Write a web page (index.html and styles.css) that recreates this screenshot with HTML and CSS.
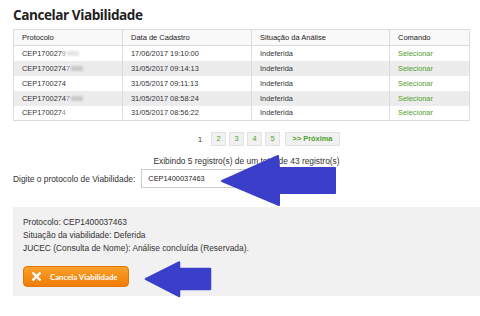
FILE: index.html
```html
<!DOCTYPE html>
<html lang="pt-BR">
<head>
<meta charset="utf-8">
<title>Cancelar Viabilidade</title>
<link rel="stylesheet" href="styles.css">
</head>
<body>
<main class="page">
  <h1 class="title">Cancelar Viabilidade</h1>
  <table class="grid">
    <thead>
      <tr><th class="c1">Protocolo</th><th class="c2">Data de Cadastro</th><th class="c3">Situação da Análise</th><th class="c4">Comando</th></tr>
    </thead>
    <tbody>
      <tr><td>CEP170027<span class="part">9</span><span class="mask light"></span></td><td>17/06/2017 19:10:00</td><td>Indeferida</td><td><a class="link" href="#">Selecionar</a></td></tr>
      <tr class="alt"><td>CEP1700274<span class="part">7</span><span class="mask"></span></td><td>31/05/2017 09:14:13</td><td>Indeferida</td><td><a class="link" href="#">Selecionar</a></td></tr>
      <tr><td>CEP1700274</td><td>31/05/2017 09:11:13</td><td>Indeferida</td><td><a class="link" href="#">Selecionar</a></td></tr>
      <tr class="alt"><td>CEP1700274<span class="part">7</span><span class="mask"></span></td><td>31/05/2017 08:58:24</td><td>Indeferida</td><td><a class="link" href="#">Selecionar</a></td></tr>
      <tr><td>CEP170027<span class="part">4</span></td><td>31/05/2017 08:56:22</td><td>Indeferida</td><td><a class="link" href="#">Selecionar</a></td></tr>
    </tbody>
  </table>
  <nav class="pager">
    <span class="current">1</span>
    <a class="pg" href="#">2</a>
    <a class="pg" href="#">3</a>
    <a class="pg" href="#">4</a>
    <a class="pg" href="#">5</a>
    <a class="pg next" href="#">&gt;&gt; Próxima</a>
  </nav>
  <p class="summary">Exibindo 5 registro(s) de um total de 43 registro(s)</p>
  <div class="search">
    <label class="label" for="proto">Digite o protocolo de Viabilidade:</label>
    <input class="field" id="proto" type="text" value="CEP1400037463">
  </div>
  <section class="result">
    <p class="line">Protocolo: CEP1400037463</p>
    <p class="line">Situação da viabilidade: Deferida</p>
    <p class="line">JUCEC (Consulta de Nome): Análise concluída (Reservada).</p>
    <button class="btn" type="button">
      <svg class="btn-icon" viewBox="0 0 10 10" width="9" height="9" aria-hidden="true"><path d="M1.5 1.5 L8.5 8.5 M8.5 1.5 L1.5 8.5" stroke="#fff" stroke-width="2.6" stroke-linecap="square"/></svg>
      <span>Cancela Viabilidade</span>
    </button>
  </section>
  <svg class="arrow arrow-a" viewBox="0 0 118 52" width="118" height="52" aria-hidden="true"><path d="M2 26 L58 1 L59 13 L115 13 L115 38 L59 38 L59 50 Z" fill="#3a3ec9" stroke="#3a3ec9" stroke-width="2" stroke-linejoin="round"/></svg>
  <svg class="arrow arrow-b" viewBox="0 0 70 38" width="70" height="38" aria-hidden="true"><path d="M2 18 L35 1.5 L35 8 L66 8 L66 28 L35 28 L35 35 Z" fill="#3a3ec9" stroke="#3a3ec9" stroke-width="2.5" stroke-linejoin="round"/></svg>
</main>
</body>
</html>
```

FILE: styles.css
```css
* { box-sizing: border-box; }
html, body { margin: 0; padding: 0; background: #fff; }
body { width: 480px; height: 316px; overflow: hidden; font-family: "Liberation Sans", Arial, sans-serif; color: #333; }

.page { position: relative; padding: 5px 0 0 13px; }

.title {
  margin: 0 0 4px;
  font-family: "Open Sans", "Liberation Sans", sans-serif;
  font-weight: 700;
  font-size: 13.6px;
  line-height: 20px;
  letter-spacing: -0.45px;
  color: #222;
}

.grid {
  width: 457px;
  border-collapse: collapse;
  border: 1px solid #dcdcdc;
  font-size: 7.4px;
  color: #333;
}
.grid th {
  text-align: left;
  font-weight: 400;
  font-size: 7.5px;
  color: #222;
  background: #f9f9f9;
  height: 16px;
  padding: 0 8px;
  border-left: 1px solid #dcdcdc;
  border-bottom: 1px solid #dcdcdc;
}
.grid td {
  height: 15px;
  padding: 0 8px;
  border-left: 1px solid #dcdcdc;
  white-space: nowrap;
}
.grid .c1 { width: 109px; }
.grid .c2 { width: 129px; }
.grid .c3 { width: 138px; }
.grid .alt td { background: #ececec; }

.part { opacity: 0.55; }
.mask {
  display: inline-block;
  width: 12px;
  height: 5px;
  margin-left: 1px;
  vertical-align: middle;
  background: #c8c8c8;
  filter: blur(1.2px);
}
.mask.light { background: #e6e6e6; }

.link { color: #4ea02e; text-decoration: none; }

.pager {
  display: flex;
  align-items: center;
  gap: 3px;
  margin: 11px 0 0 185px;
  font-size: 7.4px;
}
.current { color: #333; width: 10px; text-align: left; }
.pg {
  display: block;
  min-width: 15px;
  height: 14px;
  line-height: 12px;
  padding: 0 4px;
  text-align: center;
  color: #4ea02e;
  text-decoration: none;
  background: #f1f1f1;
  border: 1px solid #e3e3e3;
}
.pg.next { margin-left: 2px; width: 55px; font-weight: 700; }

.summary {
  margin: 9px 0 0;
  text-align: center;
  font-size: 8.4px;
  line-height: 12px;
  color: #333;
}

.search {
  display: flex;
  align-items: center;
  gap: 6px;
  margin-top: 2px;
}
.label { font-size: 8.4px; color: #333; }
.field {
  width: 193px;
  height: 19px;
  padding: 0 6px;
  border: 1px solid #ccc;
  font-family: "Liberation Sans", Arial, sans-serif;
  font-size: 7.4px;
  color: #222;
  background: #fff;
}

.result {
  margin-top: 19px;
  padding: 9px 10px 9px 10px;
  background: #f1f1f1;
}
.line {
  margin: 0;
  font-size: 8.4px;
  line-height: 13px;
  color: #333;
}
.btn {
  display: flex;
  align-items: center;
  gap: 9px;
  margin-top: 11px;
  width: 106px;
  height: 21px;
  padding: 0 8px;
  border: 1px solid #e67606;
  border-radius: 4px;
  background: linear-gradient(#faa02a, #f07c06);
  color: #fff;
  font-family: "Lato", "Open Sans", sans-serif;
  font-weight: 700;
  font-size: 7.8px;
  cursor: pointer;
}
.btn-icon { flex: none; }

.arrow { position: absolute; }
.arrow-a { left: 220px; top: 155px; }
.arrow-b { left: 144px; top: 261px; }
```
